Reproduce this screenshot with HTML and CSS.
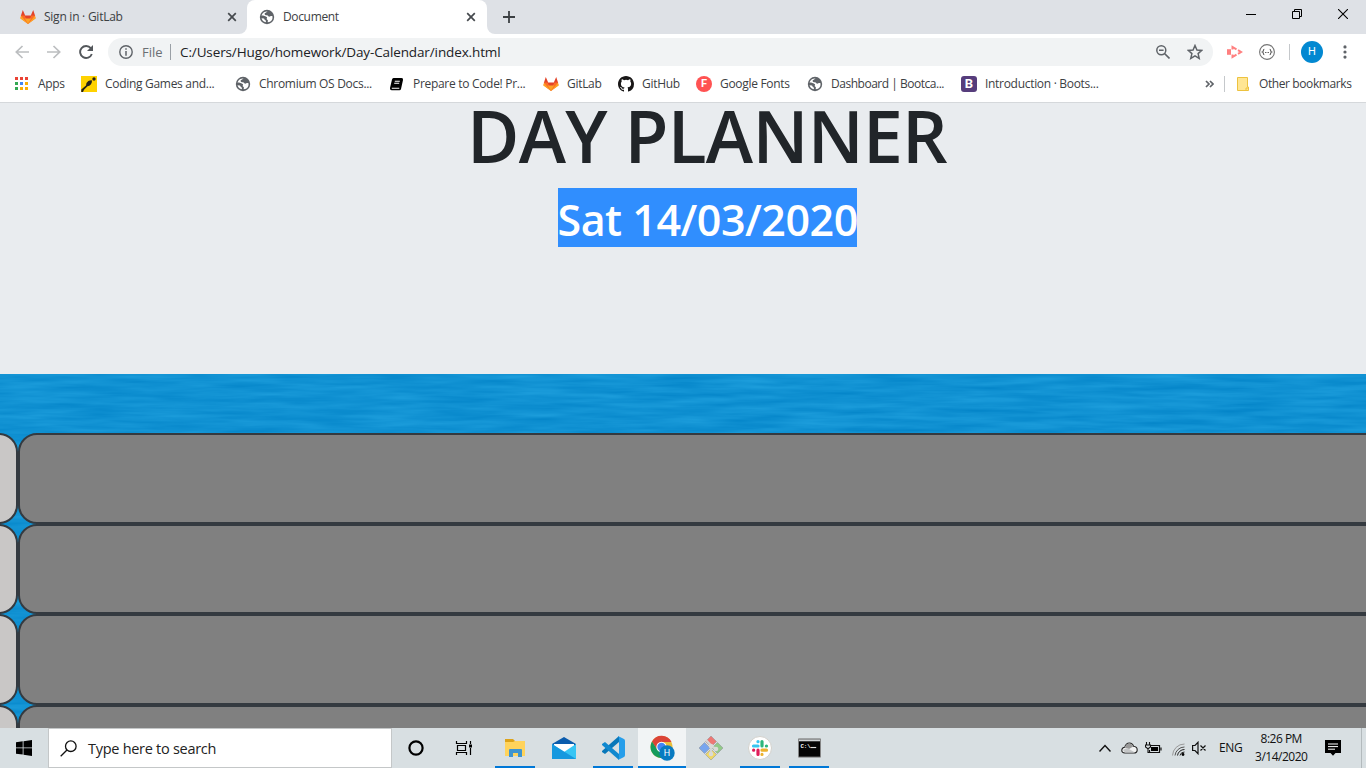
FILE: index.html
```html
<!DOCTYPE html>
<html lang="en">
<head>
<meta charset="utf-8">
<title>Document</title>
<link rel="stylesheet" href="styles.css">
</head>
<body>
<svg class="defs" width="0" height="0">
  <defs>
    <symbol id="fox" viewBox="0 0 16 16"><path fill="#e24329" d="M2.800 1 5.200 6.500h5.600L13.200 1l2 6L8 15 .8 7z"/><path fill="#fc6d26" d="M1.200 6.500h3.500L8 15 .5 9.300zM14.800 6.500h-3.500L8 15l7.500-5.700z"/><path fill="#fca326" d="M1 6.800 8 15 .3 9.500zM15 6.800 8 15l7.700-5.500zM4.900 9.500 8 15l3.100-5.500z"/></symbol>
    <symbol id="globe" viewBox="0 0 16 16"><circle cx="8" cy="8" r="7.200" fill="#5f6368"/><path fill="#fff" d="M8.800 2.500c-1.300.2-1 1-2.200 1.300-1.300.3-1.200 1.600-.3 2.200 1 .6 2.400 0 2.900 1 .4.900 1.300.8 2.200.3.800-.4 1.500-.1 2.200.2a5.600 5.600 0 0 1-4.700 5.800c-.5-.6.1-1.200 0-1.900-.1-.7-1-.6-1.200-1.300-.1-.6.800-1.300.2-1.800-1.200-1-3.300-1.700-5.400-1.700a5.600 5.600 0 0 1 6.300-4.100zM2.500 9.200l2.300.3c.8.200.5 1.200 1.200 1.600.9.400 1 1.200.9 2.200a5.700 5.700 0 0 1-4.400-4.100z"/></symbol>
    <symbol id="x" viewBox="0 0 10 10"><path d="m1.200 1.200 7.600 7.600m0-7.600L1.200 8.800" stroke="#45494d" stroke-width="1.700"/></symbol>
  </defs>
</svg>
<div class="screen">
  <header class="tabs">
    <div class="tab tab-idle"><svg class="i16"><use href="#fox"/></svg><span class="t-signin">Sign in · GitLab</span><svg class="close"><use href="#x"/></svg></div>
    <div class="tab tab-active"><svg class="i16"><use href="#globe"/></svg><span class="t-doc">Document</span><svg class="close"><use href="#x"/></svg></div>
    <div class="new-tab"><svg width="12" height="12" viewBox="0 0 12 12"><path d="M6 0v12M0 6h12" stroke="#3c4043" stroke-width="1.800"/></svg></div>
    <div class="window-buttons">
      <svg width="10" height="10"><path d="M0 5.500h10" stroke="#000"/></svg>
      <svg width="10" height="10"><path d="M.5 2.500h7v7h-7zM2.500 2.500v-2h7v7h-2" fill="none" stroke="#000"/></svg>
      <svg width="10" height="10"><path d="m0 0 10 10M10 0 0 10" stroke="#000" stroke-width="1.100"/></svg>
    </div>
  </header>
  <nav class="toolbar">
    <svg class="arrow" viewBox="0 0 14 14"><path d="M14 7H1.500M7.500 1 1.300 7l6.200 6" fill="none" stroke="#bcbec0" stroke-width="1.700"/></svg>
    <svg class="arrow arrow-next" viewBox="0 0 14 14"><path d="M0 7h12.500M6.500 1l6.200 6-6.200 6" fill="none" stroke="#bcbec0" stroke-width="1.700"/></svg>
    <svg class="reload" viewBox="0 0 14 14"><path d="M11.800 3.200A6 6 0 1 0 12.800 9" fill="none" stroke="#53575b" stroke-width="1.900"/><path d="M14 0v6H8z" fill="#53575b"/></svg>
    <div class="omnibox">
      <svg class="info" viewBox="0 0 14 14"><circle cx="7" cy="7" r="6.200" fill="none" stroke="#5f6368" stroke-width="1.400"/><path d="M7 3.200v1.600M7 6v4.800" stroke="#5f6368" stroke-width="1.500"/></svg>
      <span class="scheme">File</span><i class="bar"></i><span class="url">C:/Users/Hugo/homework/Day-Calendar/index.html</span>
      <svg class="magnify" viewBox="0 0 14 14"><circle cx="5.300" cy="5.300" r="4.500" fill="none" stroke="#5f6368" stroke-width="1.500"/><path d="m8.500 8.500 5 5M3 5.300h4.600" stroke="#5f6368" stroke-width="1.600"/></svg>
      <svg class="star" viewBox="0 0 14 14"><path d="m7 1.300 1.700 3.900 4.200.4-3.200 2.800 1 4.200L7 10.400l-3.700 2.200 1-4.200L1.100 5.600l4.200-.4z" fill="none" stroke="#5f6368" stroke-width="1.300"/></svg>
    </div>
    <svg class="cast" viewBox="0 0 16 14"><path d="M0 4.200h4v5.600H0z" fill="#ff7f7f"/><path d="M5.500 4.500V2l4 2.300M11 5.200 14 7l-3 1.800M5.500 9.500V12l4-2.300" fill="none" stroke="#ff8080" stroke-width="2"/></svg>
    <svg class="braces" viewBox="0 0 16 16"><circle cx="8" cy="8" r="7.400" fill="none" stroke="#737373" stroke-width="1.100"/><path d="M5.300 5.300c-1.500 0-.4 2.200-1.800 2.700 1.400.5.300 2.700 1.800 2.700M10.700 5.300c1.500 0 .4 2.200 1.800 2.700-1.400.5-.3 2.700-1.800 2.700" fill="none" stroke="#555" stroke-width="1.100"/><path d="M6 8.500h4" stroke="#666" stroke-dasharray="1 .5"/></svg>
    <i class="divider"></i><span class="avatar">H</span>
    <svg class="kebab" viewBox="0 0 4 14"><g fill="#5f6368"><circle cx="2" cy="1.900" r="1.600"/><circle cx="2" cy="7" r="1.600"/><circle cx="2" cy="12.100" r="1.600"/></g></svg>
  </nav>
  <nav class="bookmarks">
    <a class="bm w67"><svg class="i16" viewBox="0 0 16 16"><path fill="#ea4335" d="M1 1h3v3H1zM6 1h3v3H6zM11 1h3v3h-3z"/><path fill="#34a853" d="M1 6h3v3H1zM1 11h3v3H1z"/><path fill="#4285f4" d="M6 6h3v3H6z"/><path fill="#fbae05" d="M11 6h3v3h-3zM6 11h3v3H6zM11 11h3v3h-3z"/></svg><span>Apps</span></a>
    <a class="bm w154"><svg class="i16" viewBox="0 0 16 16"><path fill="#ffd200" d="M0 0h16v16H0z"/><path d="M.3 13.500 5 9.500q-.2-3 2.300-4.500 2-1 3.500-.8.700 2-.8 4-1.500 1.800-3.500 2L3 13.800 2 16H.3z" fill="#25221c"/><circle cx="13" cy="3" r="1.700" fill="#25221c"/></svg><span>Coding Games and...</span></a>
    <a class="bm w154"><svg class="i16"><use href="#globe"/></svg><span>Chromium OS Docs...</span></a>
    <a class="bm w154"><svg class="i16" viewBox="0 0 16 16"><path d="M4.500 2h8q2 0 1.500 2l-2 9q-.4 1.200-1.500 1.200h-8Q.5 14 1 12L3 3.500Q3.300 2 4.500 2z"/><path d="M5.800 5.200h5M5.200 7.300h5M2.800 12.200h7.500" stroke="#fff" stroke-width="1.100"/></svg><span>Prepare to Code! Pr...</span></a>
    <a class="bm w75"><svg class="i16"><use href="#fox"/></svg><span>GitLab</span></a>
    <a class="bm w78"><svg class="i16" viewBox="0 0 16 16"><path fill="#191717" d="M8 0C3.580 0 0 3.580 0 8c0 3.540 2.290 6.530 5.470 7.590.4.070.55-.17.55-.38 0-.19-.01-.82-.01-1.490-2.010.37-2.530-.49-2.690-.94-.09-.23-.48-.94-.82-1.130-.28-.15-.68-.52-.01-.53.63-.01 1.080.58 1.230.82.72 1.210 1.870.87 2.330.66.070-.52.280-.87.510-1.070-1.780-.2-3.640-.89-3.640-3.950 0-.87.310-1.590.82-2.150-.08-.2-.36-1.020.08-2.120 0 0 .67-.21 2.200.82a7.400 7.400 0 0 1 4 0c1.530-1.040 2.200-.82 2.200-.82.44 1.100.16 1.920.08 2.120.51.56.82 1.270.82 2.150 0 3.070-1.870 3.750-3.650 3.950.29.25.54.73.54 1.480 0 1.070-.01 1.930-.01 2.200 0 .21.150.46.550.38A8.010 8.010 0 0 0 16 8c0-4.420-3.580-8-8-8z"/></svg><span>GitHub</span></a>
    <a class="bm w111"><i class="badge f">F</i><span>Google Fonts</span></a>
    <a class="bm w154"><svg class="i16"><use href="#globe"/></svg><span class="dash">Dashboard | Bootca...</span></a>
    <a class="bm bm-last"><i class="badge b">B</i><span>Introduction · Boots...</span></a>
    <svg class="more" viewBox="0 0 9 8"><path d="m1 1 3 3-3 3m4-6 3 3-3 3" fill="none" stroke="#5f6368" stroke-width="1.700"/></svg>
    <i class="divider"></i>
    <svg class="folder" viewBox="0 0 12 14"><path d="M.5.500h10v9.500h1v3.500H.5z" fill="#ffe694" stroke="#edc23f"/><path d="M9 13.500V11h2" fill="none" stroke="#edc23f"/></svg>
    <span class="other">Other bookmarks</span>
  </nav>
  <main class="page">
    <section class="jumbotron">
      <h1 class="title">DAY PLANNER</h1>
      <p class="date">Sat 14/03/2020</p>
    </section>
    <section class="planner">
      <svg class="water" width="1366" height="354">
        <filter id="ripple" x="0" y="0" width="100%" height="100%" color-interpolation-filters="sRGB"><feTurbulence type="fractalNoise" baseFrequency=".014 .17" numOctaves="3" seed="7"/><feColorMatrix values=".13 0 0 0 0  .13 0 0 0 .505  .1 0 0 0 .775  0 0 0 0 1"/></filter>
        <rect width="1366" height="354" filter="url(#ripple)"/>
      </svg>
      <div class="rows">
        <div class="row"><div class="hour"></div><div class="slot"></div></div>
        <div class="row"><div class="hour"></div><div class="slot"></div></div>
        <div class="row"><div class="hour"></div><div class="slot"></div></div>
        <div class="row"><div class="hour"></div><div class="slot"></div></div>
      </div>
    </section>
  </main>
  <footer class="taskbar">
    <div class="start"><svg width="16" height="16" viewBox="0 0 16 16"><path d="M0 2.200 6.700 1.300v6.200H0zM7.500 1.200 16 0v7.500H7.500zM0 8.300h6.700v6.300L0 13.700zM7.500 8.300H16V16l-8.500-1.200z"/></svg></div>
    <div class="search"><svg width="17" height="17" viewBox="0 0 17 17"><circle cx="10.800" cy="6.200" r="5.300" fill="none" stroke="#111" stroke-width="1.300"/><path d="M7 10 .7 16.300" stroke="#111" stroke-width="1.300"/></svg><span class="search-text">Type here to search</span></div>
    <div class="apps">
      <div class="app"><svg width="18" height="18"><circle cx="9" cy="9" r="6.600" fill="none" stroke="#000" stroke-width="2.200"/></svg></div>
      <div class="app view"><svg width="18" height="18"><path d="M1.500 2v2.500h10V2M1.500 16v-2.500h10V16M2.500 6.500h8v5h-8zM15.500 2v3M15.500 9v7" fill="none" stroke="#000" stroke-width="1.200"/><path d="M14 5.500h3v3h-3z"/></svg></div>
      <div class="app open"><svg width="22" height="20" viewBox="0 0 22 20"><path d="M1 1h8l2 2h10v4H1z" fill="#dda31a"/><path d="M1 4h8l2-1h10v15H1z" fill="#ffd35b"/><path d="M5 12q0-1 1-1h11q1 0 1 1v7h-4v-4H9v4H5z" fill="#3f94cf"/></svg></div>
      <div class="app"><svg width="24" height="24" viewBox="0 0 24 24"><path d="M0 8 12 1l12 7v14H0z" fill="#0b5cad"/><path d="M2 8h20v10H2z" fill="#fff"/><path d="m0 8 12 8 12-8v15H0z" fill="#37c5f4"/><path d="m0 8 24 15H0z" fill="#1598df"/></svg></div>
      <div class="app open"><svg width="24" height="24" viewBox="0 0 24 24"><path d="M18 0v6L4 18l-3-2v-1L18 0z" fill="#0877b9"/><path d="m1 8 3-2 14 12v6L1 9z" fill="#1088cf"/><path d="m17 0 6 3q1 .5 1 2v14q0 1.500-1 2l-6 3q1-1 1-3V3q0-2-1-3z" fill="#269eea"/></svg></div>
      <div class="app open current"><svg width="26" height="26" viewBox="0 0 26 26"><circle cx="11.500" cy="12" r="11" fill="#e9bd3b"/><path d="M2 6.500A11 11 0 0 1 21.500 7H11.500L7 14.500z" fill="#db4437"/><path d="M2 6.500A11 11 0 0 0 11 23l5-8.500-8.500.5z" fill="#149b5b"/><circle cx="11.500" cy="12" r="5.200" fill="#fff"/><circle cx="11.500" cy="12" r="4.200" fill="#4285f4"/><circle cx="17" cy="18" r="7.700" fill="#087bc1"/><text class="mini-h" x="13.800" y="21.200">H</text></svg></div>
      <div class="app"><svg width="24" height="24" viewBox="0 0 24 24"><g stroke="#8b8f92" stroke-width=".5"><path d="m12 0 5.500 5.500L12 11 6.500 5.500z" fill="#ed7774"/><path d="m5.500 6.500 5.500 5.500-5.500 5.500L0 12z" fill="#78a5ee"/><path d="m18.500 6.500 5.500 5.500-5.500 5.500L13 12z" fill="#91ca88"/><path d="m12 13 5.500 5.500L12 24l-5.500-5.500z" fill="#eed767"/></g><path d="m7 4 5 5.500v9M12 10l5 3" fill="none" stroke="#d3d5d3" stroke-width="2.200"/><g fill="#d9dad8"><circle cx="12" cy="10" r="2.300"/><circle cx="17" cy="13" r="2.300"/><circle cx="12" cy="18" r="2.300"/></g></svg></div>
      <div class="app open"><svg width="24" height="24" viewBox="0 0 24 24"><circle cx="12" cy="12" r="11.500" fill="#fff" stroke="#d3d1cc"/><g fill="none" stroke-width="3.200" stroke-linecap="round"><path d="M5.500 10h4.500M10 5.600v.1" stroke="#36c5f0"/><path d="M14 5.500V10M18.500 10h-.1" stroke="#2eb67d"/><path d="M14 14.200h4.500M14 18.500v-.1" stroke="#ecb22e"/><path d="M10 14.200v4.300M5.600 14.200h.1" stroke="#e01e5a"/></g></svg></div>
      <div class="app open"><svg width="23" height="20" viewBox="0 0 24 20"><path d="M.5.500h23v19H.5z" fill="#050505" stroke="#888"/><path d="M1 1h22v2H1z" fill="#d2d5d7"/><text class="mini-c" x="2.500" y="9.500">C:\</text><path d="M13 9.500h6" stroke="#ddd" stroke-width="1.200"/></svg></div>
    </div>
    <div class="tray">
      <svg width="12" height="18"><path d="m.5 12.500 5.500-6 5.500 6" fill="none" stroke="#111" stroke-width="1.400"/></svg>
      <svg class="cloud" width="17" height="12" viewBox="0 0 17 12"><path d="M4 11q-3.500-.4-3.200-3Q1 5.500 3.700 5.300 4.800 1 8.500 1q3 0 4 3.200 3.700.3 3.700 3.700 0 3-3.500 3.100z" fill="#f1f2f2" stroke="#222" stroke-width="1.100"/><path d="M3.700 5.500Q5 1.500 8.500 1.500q3 0 3.700 3L8 7z" fill="#999"/><path d="M2 8q4-3 6-1l6 3.500H4z" fill="#c4c6c7"/></svg>
      <svg class="battery" width="17" height="13" viewBox="0 0 17 13"><path d="M6 3.500h8.500v7H4.500V8M16 5.500v3" fill="none" stroke="#111" stroke-width="1.200"/><path d="M6 5h7v4H6z"/><path d="M1.500 0v3M4.500 0v3M.5 3h5v2l-2 1.500h-1L.5 5zM3 6v4.500h2" fill="none" stroke="#111" stroke-width="1.100"/></svg>
      <svg class="wifi" width="13" height="13" viewBox="0 0 13 13"><g fill="none"><path d="M.5 12.500A12 12 0 0 1 12.500 1" stroke="#999"/><path d="M3 12.500A9.500 9.500 0 0 1 12.500 4" stroke="#555"/><path d="M5.500 12.500a7 7 0 0 1 7-6" stroke="#222"/><path d="M8 12.500a4.500 4.500 0 0 1 4.500-3.500" stroke="#222"/></g><circle cx="11" cy="11.500" r="1.400"/></svg>
      <svg class="sound" width="15" height="14" viewBox="0 0 15 14"><path d="M.6 4.500H3L6 1.300v11.400L3 9.500H.6zM8.500 4.500l5 5m0-5-5 5" fill="none" stroke="#111" stroke-width="1.200"/></svg>
      <span class="eng">ENG</span>
      <div class="clock"><span class="time">8:26 PM</span><span class="day">3/14/2020</span></div>
      <svg class="note" width="16" height="16" viewBox="0 0 16 16"><path d="M0 0h16v13h-5.500L8 15.700 5.500 13H0z"/><path d="M3 4h10M3 6.600h10M3 9.200h7" stroke="#fff"/></svg>
      <i class="desktop-edge"></i>
    </div>
  </footer>
</div>
</body>
</html>
```
FILE: styles.css
```css
* { box-sizing: border-box; }
body { margin: 0; overflow: hidden; font: 12px/16px "Open Sans", "Noto Sans", sans-serif; color: #3c4043; }
svg { display: block; flex: none; }
.defs { position: absolute; }
span { white-space: nowrap; }
.screen { width: 1366px; height: 768px; display: flex; flex-direction: column; overflow: hidden; }
.i16 { width: 16px; height: 16px; }

.tabs { height: 34px; flex: none; display: flex; align-items: center; background: linear-gradient(#dee1e6 0 17px, #fff 17px); }
.tab { height: 34px; display: flex; align-items: center; gap: 8px; letter-spacing: -.25px; }
.tab-idle { width: 247px; padding: 0 10px 0 20px; background: #dee1e6; border-bottom-right-radius: 8px; }
.tab-active { width: 240px; padding: 0 11px 0 12px; background: #fff; border-radius: 8px 8px 0 0; }
.t-doc { letter-spacing: -.35px; }
.close { width: 10px; height: 10px; margin-left: auto; }
.new-tab { width: 44px; height: 34px; padding: 11px 16px; background: #dee1e6; border-bottom-left-radius: 8px; }
.window-buttons { flex: 1; height: 34px; display: flex; justify-content: flex-end; gap: 36px; padding: 9px 18px 0 0; background: #dee1e6; }

.toolbar { height: 36px; flex: none; display: flex; align-items: center; padding-left: 15px; background: #fff; }
.arrow { width: 14px; height: 14px; }
.arrow-next { margin-left: 18px; }
.reload { width: 14px; height: 14px; margin-left: 18px; }
.omnibox { width: 1105px; height: 28px; margin-left: 15px; padding: 0 10px 0 11px; display: flex; align-items: center; border-radius: 14px; background: #f1f3f4; }
.info { width: 14px; height: 14px; }
.scheme { width: 28px; margin-left: 9px; color: #6b6f73; font-size: 13px; }
.bar { width: 1px; height: 16px; background: #9aa0a6; }
.url { margin-left: 9px; color: #202124; font-size: 13.500px; letter-spacing: -.12px; }
.magnify { width: 14px; height: 14px; margin-left: auto; }
.star { width: 16px; height: 16px; margin-left: 17px; }
.cast { width: 16px; height: 14px; margin-left: 14px; }
.braces { width: 16px; height: 16px; margin-left: 16px; }
.divider { width: 1px; height: 16px; background: #c5c8cb; }
.toolbar .divider { margin-left: 14px; }
.avatar { width: 22px; height: 22px; margin-left: 11px; border-radius: 50%; background: #0288d1; color: #fff; text-align: center; font: 11px/22px Roboto, sans-serif; }
.kebab { width: 4px; height: 14px; margin-left: 20px; }

.bookmarks { height: 33px; flex: none; display: flex; align-items: center; padding: 0 0 4px 14px; background: #fff; border-bottom: 1px solid #d5d8db; }
.bm { display: flex; gap: 8px; align-items: center; flex: none; }
.w67 { width: 67px; }
.w75 { width: 75px; }
.w78 { width: 78px; }
.w111 { width: 111px; }
.w154 { width: 154px; }
.bm-last { width: 244px; }
.badge { width: 16px; height: 16px; color: #fff; text-align: center; font: bold 11px/16px Roboto, sans-serif; }
.f { border-radius: 50%; background: #ff5252; }
.b { border-radius: 3px; background: #563d7c; font-size: 13px; }
.more { width: 9px; height: 8px; }
.bookmarks .divider { margin-left: 10px; }
.folder { width: 12px; height: 14px; margin-left: 12px; }
.bookmarks span { letter-spacing: -.3px; }
.bookmarks .other { margin-left: 10px; letter-spacing: -.4px; }
.bookmarks .dash { letter-spacing: -.48px; }

.page { height: 625px; flex: none; }
.jumbotron { height: 271px; display: flow-root; background: #e9ecef; color: #212529; }
.title { margin: -3px 0 0; padding-left: 467px; font-size: 71.500px; font-weight: 600; line-height: 72px; letter-spacing: -.75px; white-space: nowrap; }
.date { width: 299.500px; height: 59px; margin: 16px 0 0 557.500px; background: #308efe; color: #fff; font-size: 43px; font-weight: 600; line-height: 64px; letter-spacing: -.48px; white-space: nowrap; }
.planner { height: 354px; position: relative; padding-top: 59px; overflow: hidden; background: #1191d2; }
.water { position: absolute; left: 0; top: 0; }
.rows { position: relative; }
.row { height: 90.700px; display: flex; }
.hour { width: 47.500px; margin-left: -30px; flex: none; background: #c9c7c6; }
.slot { width: 1400px; flex: none; background: #808080; }
.hour, .slot { height: 90.700px; border: 2px solid #343a40; border-radius: 19px; }

.taskbar { height: 40px; flex: none; display: flex; background: #d8dfe2; color: #111; }
.start { width: 48px; display: flex; align-items: center; justify-content: center; }
.search { width: 344px; height: 40px; padding-left: 11px; display: flex; align-items: center; gap: 11px; background: #fff; border: 1px solid #c4c7c8; color: #222; }
.search-text { font-size: 14.500px; line-height: 20px; letter-spacing: -.28px; padding-top: 2px; }
.apps { display: flex; gap: 1px; margin-left: 1px; }
.app { width: 48px; height: 40px; display: flex; align-items: center; justify-content: center; }
.app:first-child { padding-right: 2px; }
.view { padding-right: 4px; }
.open { background: linear-gradient(#0078d7, #0078d7) 50% 100% / 40px 2px no-repeat; }
.current { padding-left: 2px; background: linear-gradient(#0078d7, #0078d7) 50% 100% / 48px 2px no-repeat #f1f4f5; }
.mini-h { font: 9px Roboto, sans-serif; fill: #fff; }
.mini-c { font: bold 6px "Liberation Mono", monospace; fill: #fff; }
.tray { margin-left: auto; width: 267px; display: flex; align-items: center; }
.cloud { margin-left: 10px; }
.battery { margin-left: 7px; }
.wifi { margin: 3px 0 0 10px; }
.sound { margin-left: 7px; }
.eng { margin-left: 12px; letter-spacing: -.4px; }
.clock { width: 60px; margin-left: 9px; display: flex; flex-direction: column; align-items: center; gap: 2px; letter-spacing: -.5px; }
.note { margin-left: 14px; }
.desktop-edge { width: 1px; height: 40px; margin-left: 20px; background: #b3babd; }
```
